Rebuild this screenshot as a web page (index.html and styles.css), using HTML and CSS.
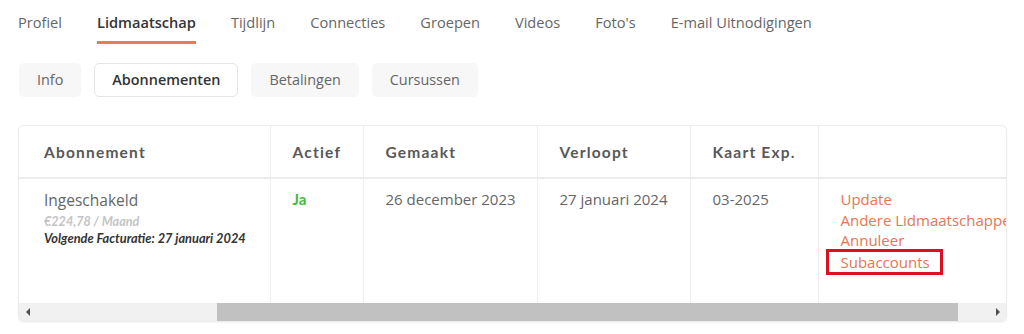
FILE: index.html
```html
<!DOCTYPE html>
<html lang="nl">
<head>
<meta charset="utf-8">
<title>Lidmaatschap</title>
<link rel="stylesheet" href="styles.css">
</head>
<body>
<nav class="main-nav">
  <a class="nav-item">Profiel</a>
  <a class="nav-item active">Lidmaatschap</a>
  <a class="nav-item">Tijdlijn</a>
  <a class="nav-item">Connecties</a>
  <a class="nav-item">Groepen</a>
  <a class="nav-item">Videos</a>
  <a class="nav-item">Foto's</a>
  <a class="nav-item">E-mail Uitnodigingen</a>
</nav>
<div class="sub-nav">
  <a class="pill">Info</a>
  <a class="pill active">Abonnementen</a>
  <a class="pill">Betalingen</a>
  <a class="pill">Cursussen</a>
</div>
<div class="table-card">
  <div class="table-scroll">
    <table class="subs">
      <colgroup>
        <col class="c1"><col class="c2"><col class="c3"><col class="c4"><col class="c5"><col class="c6">
      </colgroup>
      <thead>
        <tr>
          <th>Abonnement</th>
          <th>Actief</th>
          <th>Gemaakt</th>
          <th>Verloopt</th>
          <th>Kaart Exp.</th>
          <th></th>
        </tr>
      </thead>
      <tbody>
        <tr>
          <td>
            <div class="plan-name">Ingeschakeld</div>
            <div class="plan-price">€224,78 / Maand</div>
            <div class="plan-next">Volgende Facturatie: 27 januari 2024</div>
          </td>
          <td><span class="yes">Ja</span></td>
          <td>26 december 2023</td>
          <td>27 januari 2024</td>
          <td>03-2025</td>
          <td class="actions">
            <a class="link">Update</a>
            <a class="link">Andere Lidmaatschappen</a>
            <a class="link">Annuleer</a>
            <a class="link boxed">Subaccounts</a>
          </td>
        </tr>
      </tbody>
    </table>
  </div>
  <div class="scrollbar">
    <div class="sb-btn"><span class="arrow-left"></span></div>
    <div class="sb-track">
      <div class="sb-pre"></div>
      <div class="sb-thumb"></div>
    </div>
    <div class="sb-btn"><span class="arrow-right"></span></div>
  </div>
</div>
</body>
</html>
```

FILE: styles.css
```css
* { box-sizing: border-box; }
html, body { margin: 0; padding: 0; background: #ffffff; }
body {
  font-family: "Open Sans", "Noto Sans", sans-serif;
  color: #555;
  width: 1024px;
  height: 334px;
  overflow: hidden;
}
a { text-decoration: none; color: inherit; cursor: pointer; }

.main-nav {
  display: flex;
  gap: 35px;
  padding: 10px 0 0 18px;
  height: 44px;
}
.nav-item {
  font-size: 14.6px;
  line-height: 24px;
  color: #666;
  height: 34px;
}
.nav-item.active {
  color: #333;
  font-weight: 600;
  border-bottom: 3px solid #ea7a52;
}

.sub-nav {
  display: flex;
  gap: 13px;
  padding: 19px 0 0 19px;
}
.pill {
  height: 34px;
  line-height: 32px;
  padding: 0 17px;
  font-size: 14.4px;
  color: #666;
  background: #f7f7f8;
  border: 1px solid #f7f7f8;
  border-radius: 5px;
}
.pill.active {
  background: #fff;
  border-color: #e6e6e6;
  color: #333;
  font-weight: 600;
}

.table-card {
  margin: 28px 0 0 18px;
  width: 989px;
  border: 1px solid #ececec;
  border-radius: 5px;
  box-shadow: 0 1px 2px rgba(0,0,0,0.04);
  overflow: hidden;
}
.table-scroll { overflow: hidden; }
.subs {
  border-collapse: collapse;
  table-layout: fixed;
  width: 1060px;
}
.c1 { width: 251px; }
.c2 { width: 93px; }
.c3 { width: 174px; }
.c4 { width: 153px; }
.c5 { width: 128px; }
.c6 { width: 261px; }

.subs th {
  height: 52px;
  text-align: left;
  font-family: "Lato", sans-serif;
  font-weight: 700;
  font-size: 15.5px;
  letter-spacing: 1.2px;
  color: #585858;
  padding: 0 20px 0 22px;
  white-space: nowrap;
  border-right: 1px solid #eeeeee;
  border-bottom: 2px solid #ececec;
}
.subs th:first-child, .subs td:first-child { padding-left: 25px; }
.subs th:last-child, .subs td:last-child { border-right: none; }
.subs td {
  height: 125px;
  vertical-align: top;
  padding: 10px 22px 0 22px;
  font-size: 15px;
  line-height: 20px;
  color: #666;
  border-right: 1px solid #eeeeee;
  white-space: nowrap;
}
.plan-name { font-size: 15.5px; line-height: 22px; color: #666; }
.plan-price {
  font-family: "Lato", sans-serif;
  font-style: italic;
  font-weight: 700;
  font-size: 12.6px;
  line-height: 16px;
  margin-top: 3px;
  color: #c4c4c4;
}
.plan-next {
  font-family: "Lato", sans-serif;
  font-style: italic;
  font-weight: 700;
  font-size: 12.8px;
  line-height: 16px;
  color: #333;
}
.yes {
  font-family: "Lato", sans-serif;
  font-weight: 700;
  font-size: 15px;
  color: #3dbb3d;
}
.actions { overflow: hidden; }
.link {
  display: block;
  color: #e8764f;
  font-size: 15px;
  line-height: 20.6px;
}
.link.boxed {
  display: inline-block;
  margin: -2px 0 0 -15px;
  padding: 0 10px 0 12px;
  border: 3px solid #dd1020;
  line-height: 20px;
}

.scrollbar {
  display: flex;
  height: 18px;
  background: #f1f1f1;
  align-items: stretch;
}
.sb-btn {
  width: 17px;
  display: flex;
  align-items: center;
  justify-content: center;
}
.sb-track { flex: 1; display: flex; }
.sb-pre { width: 181px; }
.sb-thumb { width: 741px; background: #c1c1c1; }
.arrow-left, .arrow-right {
  width: 0; height: 0;
  border-top: 4px solid transparent;
  border-bottom: 4px solid transparent;
}
.arrow-left { border-right: 4px solid #505050; }
.arrow-right { border-left: 4px solid #505050; }
```
